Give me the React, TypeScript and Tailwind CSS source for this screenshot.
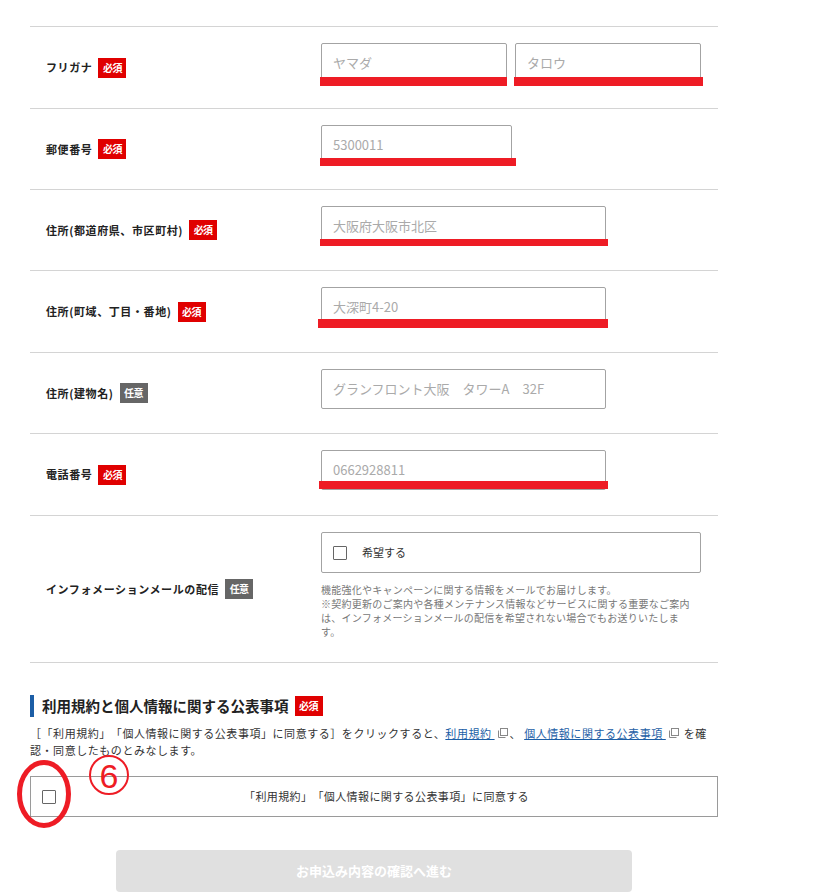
import React from 'react';

function Badge({ opt }: { opt?: boolean }) {
  return (
    <span
      className={
        opt
          ? 'ml-[6px] inline-flex h-[20px] w-[28px] shrink-0 items-center justify-center bg-[#666666] text-[10px] font-bold leading-none tracking-[-0.5px] text-white'
          : 'ml-[6px] inline-flex h-[20px] w-[28px] shrink-0 items-center justify-center bg-[#e00000] text-[10px] font-bold leading-none tracking-[-0.5px] text-white'
      }
    >
      {opt ? '任意' : '必須'}
    </span>
  );
}

function Field({ w, value, bar }: { w: string; value: string; bar?: string }) {
  return (
    <div className={`relative flex h-[40px] items-center rounded-[2px] border border-[#a3a3a3] px-[11px] text-[13px] text-[#aaaaaa] ${w}`}>
      {value}
      {bar && <div className={`absolute bg-[#ee1c25] ${bar}`} />}
    </div>
  );
}

function Row({ label, opt, pb, children }: { label: string; opt?: boolean; pb: string; children: React.ReactNode }) {
  return (
    <div className="flex border-t border-[#d4d4d4]">
      <div className="flex w-[291px] shrink-0 items-center pl-4 text-[11px] font-bold tracking-[0.6px] text-[#222222]">
        {label}
        <Badge opt={opt} />
      </div>
      <div className={`flex-1 pt-[16px] ${pb}`}>{children}</div>
    </div>
  );
}

function ExtIcon() {
  return (
    <svg width="11" height="11" viewBox="0 0 11 11" className="mx-[2px] inline-block align-[-1px]">
      <path d="M1.5 2.5v7h7" fill="none" stroke="#888" strokeWidth="1" />
      <rect x="3.5" y="0.5" width="7" height="7" fill="none" stroke="#888" strokeWidth="1" />
    </svg>
  );
}

export default function App() {
  return (
    <div className="min-h-[894px] bg-white pt-[26px] font-['Noto_Sans_CJK_JP',sans-serif] text-[#222222] [text-spacing-trim:space-all]">
      <div className="ml-[30px] w-[688px]">
        <Row label="フリガナ" pb="pb-[25px]">
          <div className="flex gap-[8px]">
            <Field w="w-[186px]" value="ヤマダ" bar="left-[-2px] top-[33px] h-[9px] w-[187px]" />
            <Field w="w-[186px]" value="タロウ" bar="left-[-2px] top-[33px] h-[9px] w-[189px]" />
          </div>
        </Row>
        <Row label="郵便番号" pb="pb-[24px]">
          <Field w="w-[191px]" value="5300011" bar="left-[-2px] top-[32px] h-[8px] w-[196px]" />
        </Row>
        <Row label="住所(都道府県、市区町村)" pb="pb-[24px]">
          <Field w="w-[285px]" value="大阪府大阪市北区" bar="left-[-2px] top-[32px] h-[7px] w-[288px]" />
        </Row>
        <Row label="住所(町域、丁目・番地)" pb="pb-[25px]">
          <Field w="w-[285px]" value="大深町4-20" bar="left-[-4px] top-[31px] h-[9px] w-[290px]" />
        </Row>
        <Row label="住所(建物名)" opt pb="pb-[24px]">
          <Field w="w-[285px]" value="グランフロント大阪　タワーA　32F" />
        </Row>
        <Row label="電話番号" pb="pb-[25px]">
          <Field w="w-[285px]" value="0662928811" bar="left-[-3px] top-[30px] h-[8px] w-[289px]" />
        </Row>
        <div className="border-b border-[#d4d4d4]">
          <Row label="インフォメーションメールの配信" opt pb="pb-[23px]">
            <div className="flex h-[41px] w-[380px] items-center rounded-[2px] border border-[#a3a3a3] pl-[11px]">
              <span className="h-[14px] w-[14px] rounded-[1px] border border-[#666666]" />
              <span className="ml-[15px] text-[11px] text-[#333333]">希望する</span>
            </div>
            <p className="mt-[10px] w-[380px] text-[10px] leading-[14px] tracking-[0.25px] text-[#777777]">
              機能強化やキャンペーンに関する情報をメールでお届けします。
              <br />
              ※契約更新のご案内や各種メンテナンス情報などサービスに関する重要なご案内
              <br />
              は、インフォメーションメールの配信を希望されない場合でもお送りいたしま
              <br />
              す。
            </p>
          </Row>
        </div>

        <div className="mt-[32px] flex h-[22px] items-center border-l-[4px] border-[#1c5ea6] pl-[8px]">
          <span className="text-[14.5px] font-bold text-[#222222]">利用規約と個人情報に関する公表事項</span>
          <Badge />
        </div>
        <p className="mt-[8px] whitespace-nowrap text-[11px] leading-[17px] tracking-[0.55px] text-[#333333]">
          ［「利用規約」「個人情報に関する公表事項」に同意する］をクリックすると、
          <a className="text-[#1c5ea6] underline">利用規約 </a>
          <ExtIcon />、 <a className="text-[#1c5ea6] underline">個人情報に関する公表事項 </a>
          <ExtIcon /> を確
          <br />
          認・同意したものとみなします。
        </p>

        <div className="relative mt-[17px]">
          <div className="flex h-[41px] items-center border border-[#9a9a9a] pl-[11px]">
            <span className="h-[14px] w-[14px] shrink-0 rounded-[1px] border border-[#666666]" />
            <span className="flex-1 text-center text-[11px] tracking-[0.4px] text-[#333333]">
              「利用規約」「個人情報に関する公表事項」に同意する
            </span>
          </div>
          <svg width="58" height="72" viewBox="0 0 58 72" className="absolute left-[-15px] top-[-18px]">
            <ellipse cx="29" cy="36" rx="24.5" ry="31.5" fill="none" stroke="#ee1c25" strokeWidth="5" />
          </svg>
          <svg width="44" height="42" viewBox="0 0 44 42" className="absolute left-[57px] top-[-21px]">
            <circle cx="22" cy="20" r="19" fill="none" stroke="#ee1c25" strokeWidth="2" />
            <text x="22" y="32.5" textAnchor="middle" fontSize="34" fontFamily="Liberation Sans, sans-serif" fill="#ee1c25">
              6
            </text>
          </svg>
        </div>

        <button className="mx-auto mt-[33px] flex h-[42px] w-[516px] items-center justify-center rounded-[4px] bg-[#e0e0e0] text-[13px] font-bold text-white">
          お申込み内容の確認へ進む
        </button>
      </div>
    </div>
  );
}
